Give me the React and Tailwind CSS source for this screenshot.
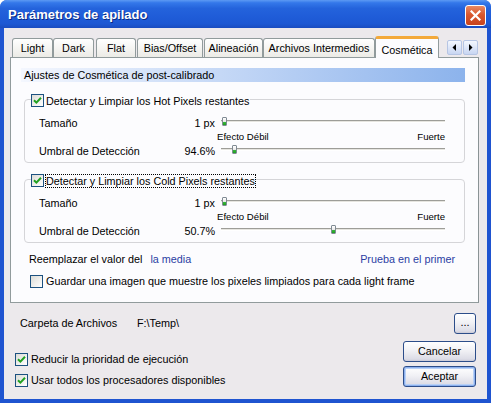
import React from "react";

const Check = ({ checked }) => (
  <span className="w-[13px] h-[13px] border border-[#1c5180] bg-[linear-gradient(135deg,#dcdcd7,#ffffff)] flex items-center justify-center shrink-0">
    {checked && (
      <svg width="9" height="9" viewBox="0 0 9 9">
        <path d="M1 4.2 L3.4 6.6 L8 1.8" stroke="#21a121" strokeWidth="2" fill="none" />
      </svg>
    )}
  </span>
);

const Slider = ({ thumbClass }) => (
  <div className="relative h-[16px] w-[224px] ml-[6px]">
    <div className="absolute left-0 right-0 top-[5px] h-[3px] border-t border-[#9d9d98] bg-[#e6e5e0] border-b border-b-white" />
    <div className={"absolute top-[2px] w-[5px] h-[9px] rounded-[1px] border border-[#7f8a93] bg-[linear-gradient(180deg,#ffffff_0%,#e8e8e8_55%,#37b33a_60%,#21a121_100%)] " + thumbClass} />
  </div>
);

const Row = ({ label, value, thumbClass }) => (
  <div className="flex items-center h-[16px]">
    <span className="w-[120px]">{label}</span>
    <span className="w-[56px] text-right">{value}</span>
    <Slider thumbClass={thumbClass} />
  </div>
);

const Group = ({ title, focus, value1, thumb1, value2, thumb2 }) => (
  <div className="flex flex-col ml-[13px] w-[441px]">
    <div className="relative z-10 flex items-center h-[13px] ml-[7px] w-fit bg-[#fcfcfe] pr-[1px]">
      <Check checked />
      <span className={"ml-[2px] leading-[12px] " + (focus ? "outline-1 outline-dotted outline-black" : "")}>{title}</span>
    </div>
    <div className="-mt-[8px] border border-[#d5d5d8] rounded-[4px] pt-[15px] pb-[3px] pl-[14px]">
      <Row label="Tamaño" value="1 px" thumbClass="left-[1px]" />
      <div className="flex items-center justify-between h-[12px] ml-[178px] w-[228px] text-[9.6px]">
        <span>Efecto Débil</span>
        <span>Fuerte</span>
      </div>
      <Row label="Umbral de Detección" value={value2} thumbClass={thumb2} />
    </div>
  </div>
);

const XPButton = ({ children, def, className }) => (
  <div className={"rounded-[3px] border border-[#2c4d8a] bg-[linear-gradient(180deg,#ffffff_0%,#f1f1f5_45%,#dcdce6_90%,#c9c9d6_100%)] flex items-center justify-center " + (def ? "shadow-[inset_0_0_0_1px_#8cb0ee,inset_0_0_0_2px_#b9d1f6] " : "") + className}>
    {children}
  </div>
);

const tabs = [
  ["Light", "w-[41px]", "mr-0"],
  ["Dark", "w-[41px]", "mr-[2px]"],
  ["Flat", "w-[40px]", "mr-[1px]"],
  ["Bias/Offset", "w-[66px]", "mr-[1px]"],
  ["Alineación", "w-[59px]", "mr-0"],
  ["Archivos Intermedios", "w-[112px]", "mr-0"],
];

export default function App() {
  return (
    <div className="w-[491px] h-[403px] flex flex-col bg-[#1f54d0] rounded-t-[7px] overflow-hidden font-['Liberation_Sans',Arial,sans-serif] text-[10.8px] text-black">
      {/* title bar */}
      <div className="h-[28px] shrink-0 flex items-center pl-[8px] pr-[5px] bg-[linear-gradient(180deg,#5d9af3_0%,#3478ea_10%,#2463dc_30%,#1f5cd8_60%,#1d58d3_85%,#1a4cc0_100%)]">
        <span className="font-bold text-[13px] text-white [text-shadow:1px_1px_0_#0b2a82] mt-[2px]">Parámetros de apilado</span>
        <div className="ml-auto mt-[2px] w-[21px] h-[21px] rounded-[3px] border border-white bg-[linear-gradient(180deg,#e88a64_0%,#d9582f_45%,#c8431d_100%)] flex items-center justify-center">
          <svg width="11" height="11" viewBox="0 0 11 11">
            <path d="M1.5 1.5 L9.5 9.5 M9.5 1.5 L1.5 9.5" stroke="white" strokeWidth="2.2" strokeLinecap="square" />
          </svg>
        </div>
      </div>

      {/* body */}
      <div className="flex-1 mx-[4px] mb-[4px] bg-[#ece9ec] flex flex-col">
        <div className="ml-[6px] w-[469px] flex flex-col mt-[8px]">
          {/* tabs */}
          <div className="flex items-end h-[21px] pl-[2px] relative z-10">
            {tabs.map(([t, w, m]) => (
              <div key={t} className={"h-[19px] flex items-center justify-center border border-b-0 border-[#919b9c] rounded-t-[3px] bg-[linear-gradient(180deg,#ffffff,#ecebe6)] " + w + " " + m}>
                {t}
              </div>
            ))}
            <div className="w-[64px] h-[22px] -mb-[1px] flex items-start justify-center pt-[3px] border-x border-[#919b9c] border-t-[3px] border-t-[#f3a93a] rounded-t-[3px] bg-[#fcfcfe]">
              Cosmética
            </div>
            <div className="ml-auto mr-[1px] self-start mt-[4px] flex gap-[1px]">
              <div className="w-[15px] h-[15px] rounded-[2px] border border-[#b6c5e4] bg-[linear-gradient(180deg,#f4f7fe,#c8d6f2)] flex items-center justify-center">
                <svg width="5" height="7" viewBox="0 0 5 7"><path d="M4 0 L0.5 3.5 L4 7 Z" fill="#000" /></svg>
              </div>
              <div className="w-[15px] h-[15px] rounded-[2px] border border-[#b6c5e4] bg-[linear-gradient(180deg,#f4f7fe,#c8d6f2)] flex items-center justify-center">
                <svg width="5" height="7" viewBox="0 0 5 7"><path d="M1 0 L4.5 3.5 L1 7 Z" fill="#000" /></svg>
              </div>
            </div>
          </div>

          {/* panel */}
          <div className="h-[246px] border border-[#919b9c] border-r-[#8a9395] bg-[#fcfcfe] flex flex-col">
            <div className="mt-[10px] ml-[10px] w-[444px] h-[14px] flex items-center pl-[3px] bg-[linear-gradient(90deg,#f4f7fe_0%,#c5d8f6_45%,#8cb3ec_100%)]">
              Ajustes de Cosmética de post-calibrado
            </div>
            <div className="mt-[12px]">
              <Group title="Detectar y Limpiar los Hot Pixels restantes" value2="94.6%" thumb2="left-[11px]" />
            </div>
            <div className="mt-[11px]">
              <Group title="Detectar y Limpiar los Cold Pixels restantes" focus value2="50.7%" thumb2="left-[110px]" />
            </div>
            <div className="mt-[8px] ml-[18px] w-[426px] h-[16px] flex items-center">
              <span>Reemplazar el valor del</span>
              <span className="ml-[8px] text-[#2b3ea3]">la media</span>
              <span className="ml-auto text-[#2b3ea3]">Prueba en el primer</span>
            </div>
            <div className="mt-[8px] ml-[19px] flex items-center h-[13px]">
              <Check />
              <span className="ml-[3px]">Guardar una imagen que muestre los pixeles limpiados para cada light frame</span>
            </div>
          </div>
        </div>

        {/* folder row */}
        <div className="mt-[10px] h-[21px] flex items-center pl-[16px] pr-[11px]">
          <span className="w-[117px]">Carpeta de Archivos</span>
          <span>F:\Temp\</span>
          <XPButton className="ml-auto w-[22px] h-[21px] text-[11px] leading-none pb-[3px]">...</XPButton>
        </div>

        {/* bottom */}
        <div className="mt-[7px] flex pl-[11px] pr-[11px]">
          <div className="flex flex-col pt-[8px]">
            <div className="h-[21px] flex items-center">
              <Check checked />
              <span className="ml-[3px]">Reducir la prioridad de ejecución</span>
            </div>
            <div className="h-[21px] flex items-center">
              <Check checked />
              <span className="ml-[3px]">Usar todos los procesadores disponibles</span>
            </div>
          </div>
          <div className="ml-auto flex flex-col gap-[4px]">
            <XPButton className="w-[73px] h-[21px]">Cancelar</XPButton>
            <XPButton def className="w-[73px] h-[21px]">Aceptar</XPButton>
          </div>
        </div>
      </div>
    </div>
  );
}
